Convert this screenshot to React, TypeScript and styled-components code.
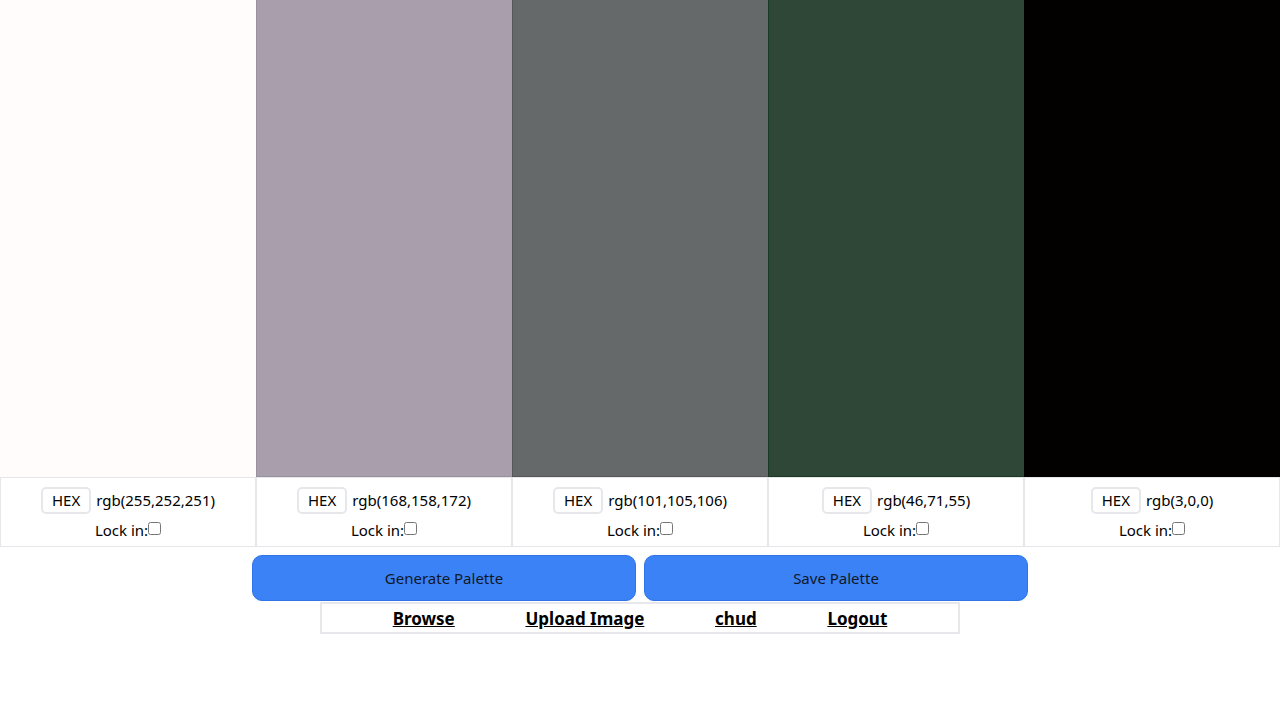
import React from "react";
import styled, { createGlobalStyle } from "styled-components";

const Global = createGlobalStyle`
  html, body { margin: 0; padding: 0; background: #ffffff; }
  body { font-family: "Noto Sans", "Open Sans", Arial, sans-serif; color: #000; }
  * { box-sizing: border-box; }
`;

const Page = styled.div`
  display: flex;
  flex-direction: column;
  align-items: center;
  width: 1280px;
`;

const Palette = styled.div`
  display: grid;
  grid-template-columns: repeat(5, 256px);
  width: 100%;
`;

const Column = styled.div`
  display: flex;
  flex-direction: column;
`;

const Swatch = styled.div<{ $color: string; $edge: string }>`
  height: 477px;
  background: ${(p) => p.$color};
  box-shadow: inset 1px 0 0 ${(p) => p.$edge}, inset 0 -1px 0 ${(p) => p.$edge};
`;

const Info = styled.div`
  height: 70px;
  border: 1px solid #e5e7eb;
  display: flex;
  flex-direction: column;
  align-items: center;
  padding-top: 9px;
  gap: 4px;
  font-size: 15px;
`;

const InfoRow = styled.div`
  display: flex;
  align-items: center;
  gap: 5px;
  height: 27px;
`;

const RgbText = styled.span`
  padding-bottom: 2px;
`;

const HexButton = styled.button`
  font-family: inherit;
  font-size: 15px;
  color: #000;
  background: #fff;
  border: 2px solid #e5e7eb;
  border-radius: 5px;
  height: 27px;
  padding: 0 9px 1px;
  line-height: 1;
`;

const LockRow = styled.label`
  display: flex;
  align-items: center;
  height: 24px;
  font-size: 15px;
`;

const Check = styled.input`
  width: 13px;
  height: 13px;
  margin: -3px 0 0 0;
`;

const Buttons = styled.div`
  display: flex;
  gap: 8px;
  margin-top: 8px;
`;

const BigButton = styled.button`
  width: 384px;
  height: 46px;
  background: #3b82f6;
  border: 1px solid #2f74e8;
  border-radius: 10px;
  font-family: inherit;
  font-size: 15px;
  color: #111827;
`;

const Nav = styled.nav`
  margin-top: 1px;
  width: 640px;
  height: 32px;
  border: 2px solid #e5e7eb;
  display: flex;
  justify-content: space-evenly;
  align-items: center;
`;

const NavLink = styled.a`
  font-weight: 700;
  font-size: 17px;
  color: #000;
  text-decoration: underline;
  cursor: pointer;
`;

const colors: { rgb: [number, number, number]; edge: string }[] = [
  { rgb: [255, 252, 251], edge: "rgba(0,0,0,0)" },
  { rgb: [168, 158, 172], edge: "rgba(0,0,0,0.08)" },
  { rgb: [101, 105, 106], edge: "rgba(0,0,0,0.15)" },
  { rgb: [46, 71, 55], edge: "#1b3a24" },
  { rgb: [3, 0, 0], edge: "rgba(0,0,0,0)" },
];

export default function App() {
  return (
    <>
      <Global />
      <Page>
        <Palette>
          {colors.map((c, i) => {
            const str = `rgb(${c.rgb.join(",")})`;
            return (
              <Column key={i}>
                <Swatch $color={str} $edge={c.edge} />
                <Info>
                  <InfoRow>
                    <HexButton>HEX</HexButton>
                    <RgbText>{str}</RgbText>
                  </InfoRow>
                  <LockRow>
                    Lock in:
                    <Check type="checkbox" />
                  </LockRow>
                </Info>
              </Column>
            );
          })}
        </Palette>
        <Buttons>
          <BigButton>Generate Palette</BigButton>
          <BigButton>Save Palette</BigButton>
        </Buttons>
        <Nav>
          <NavLink>Browse</NavLink>
          <NavLink>Upload Image</NavLink>
          <NavLink>chud</NavLink>
          <NavLink>Logout</NavLink>
        </Nav>
      </Page>
    </>
  );
}
